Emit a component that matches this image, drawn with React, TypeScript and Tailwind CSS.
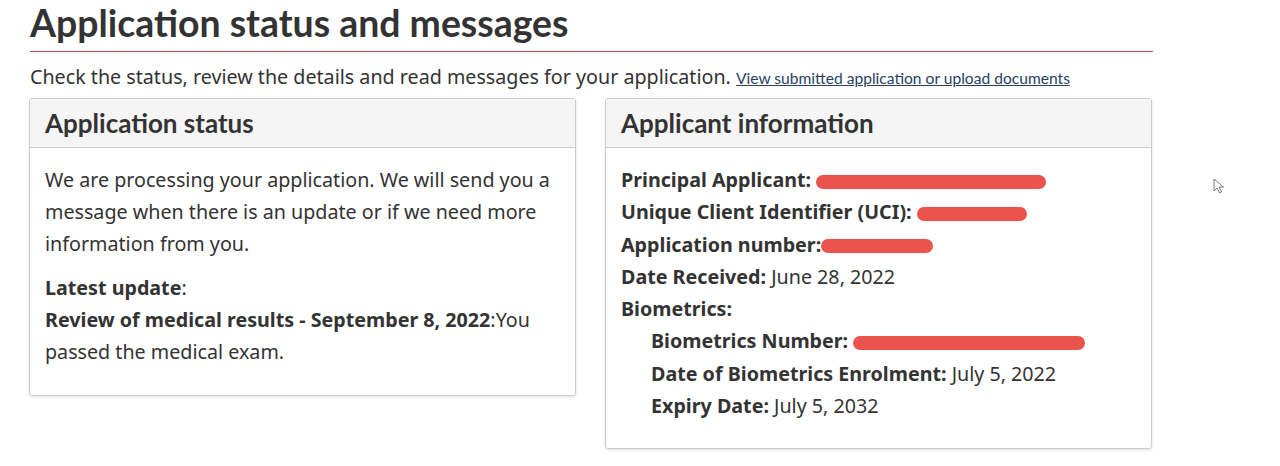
export default function App() {
  const lato = { fontFamily: "Lato, 'Noto Sans', sans-serif" };
  return (
    <div className="relative h-[466px] w-[1280px] overflow-hidden bg-white text-[#333]" style={{ fontFamily: "'Noto Sans', sans-serif" }}>
      <div className="w-[1123px] ml-[30px]">
        <h1 className="text-[37.4px] font-bold leading-[48px] mt-[-1px] text-[#333]" style={lato}>
          Application status and messages
        </h1>
        <div className="h-px bg-[#a0575c] mt-[4px]" />
        <p className="text-[19.7px] leading-[26px] mt-[12px]">
          Check the status, review the details and read messages for your application.{" "}
          <a href="#" className="text-[15.6px] underline text-[#284162]" style={lato}>
            View submitted application or upload documents
          </a>
        </p>
        <div className="grid grid-cols-[547px_547px] gap-[29px] mt-[7px] ml-[-1px]">
          <section className="self-start border border-[#ccc] rounded-[3px] shadow-sm">
            <h2 className="bg-[#f5f5f5] border-b border-[#ccc] px-[15px] h-[49px] flex items-center text-[26px] font-bold text-[#333]" style={lato}>
              Application status
            </h2>
            <div className="px-[15px] pt-[16px] pb-[27px] text-[19.7px] leading-[32px]">
              <p>We are processing your application. We will send you a message when there is an update or if we need more information from you.</p>
              <p className="mt-[12px]"><strong>Latest update</strong>:</p>
              <p><strong>Review of medical results - September 8, 2022</strong>:You passed the medical exam.</p>
            </div>
          </section>
          <section className="border border-[#ccc] rounded-[3px] shadow-sm">
            <h2 className="bg-[#f5f5f5] border-b border-[#ccc] px-[15px] h-[49px] flex items-center text-[26px] font-bold text-[#333]" style={lato}>
              Applicant information
            </h2>
            <div className="px-[15px] pt-[16px] pb-[26px] text-[19.7px] leading-[32.3px]">
              <p><strong>Principal Applicant:</strong> <Redact w={230} /></p>
              <p><strong>Unique Client Identifier (UCI):</strong> <Redact w={110} /></p>
              <p><strong>Application number:</strong><Redact w={112} /></p>
              <p><strong>Date Received:</strong> June 28, 2022</p>
              <p><strong>Biometrics:</strong></p>
              <div className="pl-[30px]">
                <p><strong>Biometrics Number:</strong> <Redact w={232} /></p>
                <p><strong>Date of Biometrics Enrolment:</strong> July 5, 2022</p>
                <p><strong>Expiry Date:</strong> July 5, 2032</p>
              </div>
            </div>
          </section>
        </div>
      </div>
      <svg className="absolute left-[1213px] top-[178px]" width="12" height="16" viewBox="0 0 12 16">
        <path d="M1 1 L1 13 L4 10 L6.5 15 L8.5 14 L6 9 L10.5 9 Z" fill="white" stroke="#555" strokeWidth="0.8" />
      </svg>
    </div>
  );
}

function Redact({ w }: { w: number }) {
  return (
    <span className="inline-block align-middle h-[14px] rounded-full bg-[#e8413a] opacity-90" style={{ width: w }} />
  );
}
